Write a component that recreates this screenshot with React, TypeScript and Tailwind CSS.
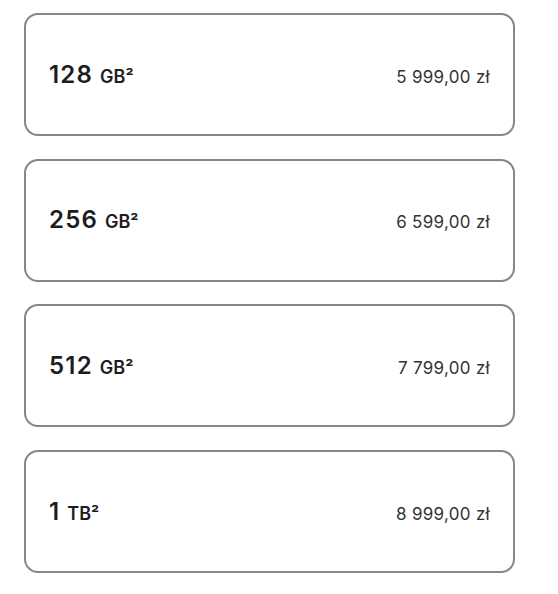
const options = [
  { size: "128", unit: "GB", price: "5 999,00 zł" },
  { size: "256", unit: "GB", price: "6 599,00 zł" },
  { size: "512", unit: "GB", price: "7 799,00 zł" },
  { size: "1", unit: "TB", price: "8 999,00 zł" },
];

function StorageOption({ size, unit, price }: { size: string; unit: string; price: string }) {
  return (
    <button className="flex h-[123px] w-[491px] items-center rounded-[14px] border-2 border-[#86868b] bg-white px-[23px] text-left text-[#1d1d1f]">
      <div className="flex w-full items-baseline justify-between">
        <span className="flex items-baseline gap-[7px] font-semibold">
          <span className="text-[24px] tracking-[1.2px]">{size}</span>
          <span className="text-[18px]">{unit}²</span>
        </span>
        <span className="text-[17px] tracking-[0.3px] text-[#333336]">{price}</span>
      </div>
    </button>
  );
}

export default function App() {
  return (
    <div className="flex min-h-[594px] flex-col gap-[22.7px] bg-white pl-6 pt-[13px] font-['Inter','Liberation_Sans',sans-serif]">
      {options.map((o) => (
        <StorageOption key={o.size} {...o} />
      ))}
    </div>
  );
}
